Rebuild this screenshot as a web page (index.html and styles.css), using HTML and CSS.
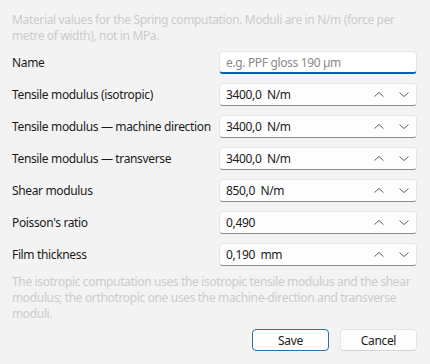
FILE: index.html
```html
<!DOCTYPE html>
<html lang="en">
<head>
<meta charset="utf-8">
<link rel="stylesheet" href="styles.css">
</head>
<body>
<div class="dialog">
  <p class="hint">Material values for the Spring computation. Moduli are in N/m (force per metre of width), not in MPa.</p>
  <div class="form">
    <label class="label">Name</label>
    <div class="field focused"><span class="placeholder">e.g. PPF gloss 190 µm</span></div>

    <label class="label">Tensile modulus (isotropic)</label>
    <div class="field"><span class="value">3400,0&nbsp; N/m</span><span class="spin"><svg viewBox="0 0 10 5" class="chev"><path d="M0.5 4.5 L5 0.5 L9.5 4.5"/></svg><svg viewBox="0 0 10 5" class="chev"><path d="M0.5 0.5 L5 4.5 L9.5 0.5"/></svg></span></div>

    <label class="label">Tensile modulus — machine direction</label>
    <div class="field"><span class="value">3400,0&nbsp; N/m</span><span class="spin"><svg viewBox="0 0 10 5" class="chev"><path d="M0.5 4.5 L5 0.5 L9.5 4.5"/></svg><svg viewBox="0 0 10 5" class="chev"><path d="M0.5 0.5 L5 4.5 L9.5 0.5"/></svg></span></div>

    <label class="label">Tensile modulus — transverse</label>
    <div class="field"><span class="value">3400,0&nbsp; N/m</span><span class="spin"><svg viewBox="0 0 10 5" class="chev"><path d="M0.5 4.5 L5 0.5 L9.5 4.5"/></svg><svg viewBox="0 0 10 5" class="chev"><path d="M0.5 0.5 L5 4.5 L9.5 0.5"/></svg></span></div>

    <label class="label">Shear modulus</label>
    <div class="field"><span class="value">850,0&nbsp; N/m</span><span class="spin"><svg viewBox="0 0 10 5" class="chev"><path d="M0.5 4.5 L5 0.5 L9.5 4.5"/></svg><svg viewBox="0 0 10 5" class="chev"><path d="M0.5 0.5 L5 4.5 L9.5 0.5"/></svg></span></div>

    <label class="label">Poisson's ratio</label>
    <div class="field"><span class="value">0,490</span><span class="spin"><svg viewBox="0 0 10 5" class="chev"><path d="M0.5 4.5 L5 0.5 L9.5 4.5"/></svg><svg viewBox="0 0 10 5" class="chev"><path d="M0.5 0.5 L5 4.5 L9.5 0.5"/></svg></span></div>

    <label class="label">Film thickness</label>
    <div class="field"><span class="value">0,190&nbsp; mm</span><span class="spin"><svg viewBox="0 0 10 5" class="chev"><path d="M0.5 4.5 L5 0.5 L9.5 4.5"/></svg><svg viewBox="0 0 10 5" class="chev"><path d="M0.5 0.5 L5 4.5 L9.5 0.5"/></svg></span></div>
  </div>
  <p class="hint bottom">The isotropic computation uses the isotropic tensile modulus and the shear modulus; the orthotropic one uses the machine-direction and transverse moduli.</p>
  <div class="actions">
    <button class="btn primary">Save</button>
    <button class="btn">Cancel</button>
  </div>
</div>
</body>
</html>
```
FILE: styles.css
```css
html, body {
  margin: 0;
  padding: 0;
  background: #f3f3f3;
}
body {
  font-family: "Noto Sans", "Open Sans", sans-serif;
  font-size: 12px;
  letter-spacing: -0.35px;
  color: #1b1b1b;
}
.dialog {
  width: 430px;
  height: 364px;
  box-sizing: border-box;
  padding: 12px 13px 0 12px;
  display: flex;
  flex-direction: column;
}
.hint {
  margin: 0;
  color: #cbcbcb;
  line-height: 16px;
  width: 404px;
}
.form {
  margin-top: 7px;
  display: grid;
  grid-template-columns: 207px 198px;
  row-gap: 9px;
  align-items: center;
}
.label {
  line-height: 16px;
  white-space: nowrap;
}
.field {
  height: 23px;
  box-sizing: border-box;
  background: #fdfdfd;
  border: 1px solid #e6e6e6;
  border-bottom-color: #8b8b8b;
  border-radius: 4px;
  display: flex;
  align-items: center;
  padding-left: 6px;
}
.field.focused {
  background: #ffffff;
  border-bottom: 2px solid #005fb8;
  padding-top: 1px;
}
.placeholder {
  color: #8a8a8a;
  flex: 1;
}
.value {
  flex: 1;
  color: #1b1b1b;
}
.spin {
  display: flex;
  align-items: center;
  gap: 15px;
  padding-right: 7px;
}
.chev {
  width: 10px;
  height: 5px;
  overflow: visible;
}
.chev path {
  fill: none;
  stroke: #5f5f5f;
  stroke-width: 1;
}
.bottom {
  margin-top: 8px;
}
.actions {
  margin-top: 7px;
  display: flex;
  justify-content: flex-end;
  gap: 11px;
}
.btn {
  width: 77px;
  height: 22px;
  box-sizing: border-box;
  font-family: inherit;
  font-size: 12px;
  letter-spacing: inherit;
  color: #1b1b1b;
  background: #fdfdfd;
  border: 1px solid #e5e5e5;
  border-bottom-color: #d4d4d4;
  border-radius: 4px;
  padding: 0;
}
.btn.primary {
  border: 1px solid #2b6fad;
}
```
